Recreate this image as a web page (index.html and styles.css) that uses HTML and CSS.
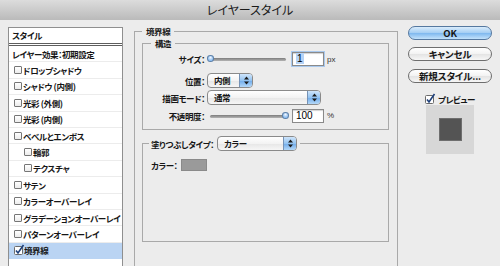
FILE: index.html
```html
<!DOCTYPE html>
<html lang="ja">
<head>
<meta charset="utf-8">
<title>レイヤースタイル</title>
<link rel="stylesheet" href="styles.css">
</head>
<body>
<div class="titlebar">レイヤースタイル</div>
<div class="content">
  <div class="list">
    <div class="list-head">スタイル</div>
    <div class="row plain">レイヤー効果：初期設定</div>
    <div class="row"><span class="cb"></span>ドロップシャドウ</div>
    <div class="row"><span class="cb"></span>シャドウ (内側)</div>
    <div class="row"><span class="cb"></span>光彩 (外側)</div>
    <div class="row"><span class="cb"></span>光彩 (内側)</div>
    <div class="row"><span class="cb"></span>ベベルとエンボス</div>
    <div class="row sub"><span class="cb"></span>輪郭</div>
    <div class="row sub"><span class="cb"></span>テクスチャ</div>
    <div class="row"><span class="cb"></span>サテン</div>
    <div class="row"><span class="cb"></span>カラーオーバーレイ</div>
    <div class="row"><span class="cb"></span>グラデーションオーバーレイ</div>
    <div class="row"><span class="cb"></span>パターンオーバーレイ</div>
    <div class="row selected"><svg class="check" width="10" height="10" viewBox="0 0 10 10"><rect x="0.5" y="1.5" width="8" height="8" rx="1" fill="#fff" stroke="#6b6b6b"/><path d="M2 5.5 L4 8 L9.5 0" fill="none" stroke="#1d3f7a" stroke-width="1.6"/></svg>境界線</div>
    <div class="row"></div>
  </div>

  <fieldset class="outer">
    <legend>境界線</legend>
    <fieldset class="struct">
      <legend>構造</legend>
      <div class="field f1">
        <span class="lab">サイズ：</span>
        <div class="slider"><div class="track"></div><div class="thumb start"></div></div>
        <div class="num"><span class="sel">1</span></div>
        <span class="unit">px</span>
      </div>
      <div class="field f2">
        <span class="lab">位置：</span>
        <div class="popup pos"><span class="val">内側</span><span class="arrows"><svg width="5" height="9" viewBox="0 0 5 9"><path d="M2.5 0.5 L5 3.5 L0 3.5Z M2.5 8.5 L5 5.5 L0 5.5Z" fill="#1b1b1b"/></svg></span></div>
      </div>
      <div class="field f3">
        <span class="lab">描画モード：</span>
        <div class="popup blend"><span class="val">通常</span><span class="arrows"><svg width="5" height="9" viewBox="0 0 5 9"><path d="M2.5 0.5 L5 3.5 L0 3.5Z M2.5 8.5 L5 5.5 L0 5.5Z" fill="#1b1b1b"/></svg></span></div>
      </div>
      <div class="field f4">
        <span class="lab">不透明度：</span>
        <div class="slider"><div class="track"></div><div class="thumb end"></div></div>
        <div class="num">100</div>
        <span class="unit">%</span>
      </div>
    </fieldset>
    <fieldset class="fill">
      <legend class="fill-legend"><span>塗りつぶしタイプ：</span><span class="popup ftype"><span class="val">カラー</span><span class="arrows"><svg width="5" height="9" viewBox="0 0 5 9"><path d="M2.5 0.5 L5 3.5 L0 3.5Z M2.5 8.5 L5 5.5 L0 5.5Z" fill="#1b1b1b"/></svg></span></span></legend>
      <div class="color-row">
        <span>カラー：</span>
        <span class="swatch"></span>
      </div>
    </fieldset>
  </fieldset>

  <div class="side">
    <div class="btn default">OK</div>
    <div class="btn cancel">キャンセル</div>
    <div class="btn newstyle">新規スタイル...</div>
    <div class="preview-row"><svg class="check" width="10" height="10" viewBox="0 0 10 10"><rect x="0.5" y="1.5" width="8" height="8" rx="1" fill="#fff" stroke="#6b6b6b"/><path d="M2 5.5 L4 8 L9.5 0" fill="none" stroke="#1d3f7a" stroke-width="1.6"/></svg><span>プレビュー</span></div>
    <div class="preview-box"><div class="preview-square"></div></div>
  </div>
</div>
</body>
</html>
```

FILE: styles.css
```css
* { box-sizing: border-box; }
html, body { margin: 0; padding: 0; }
body {
  width: 500px;
  height: 266px;
  overflow: hidden;
  background: #ececec;
  font-family: "Noto Sans CJK JP", "Noto Sans", sans-serif;
  font-size: 8.5px;
  letter-spacing: -0.4px;
  font-weight: 600;
  color: #161616;
  font-feature-settings: "palt";
}

.titlebar {
  height: 20px;
  background: linear-gradient(#dcdcdc, #bababa);
  text-align: center;
  font-size: 12px;
  font-weight: 400;
  letter-spacing: 0;
  line-height: 20px;
  color: #1a1a1a;
}

.content {
  display: flex;
  align-items: flex-start;
}

/* left style list */
.list {
  margin: 7px 0 0 8px;
  width: 115px;
  height: 260px;
  border: 1px solid #8f8f8f;
  border-bottom: none;
  background: #fff;
}
.list-head {
  height: 18px;
  line-height: 15px;
  padding-left: 3px;
  border-bottom: 3px double #5e5e5e;
}
.row {
  display: flex;
  align-items: center;
  height: 16.4px;
  padding-left: 5px;
  border-bottom: 1px solid #ececec;
  white-space: nowrap;
}
.row.plain { padding-left: 3px; }
.row.sub { padding-left: 15px; }
.row.selected { background: #bad4f3; border-bottom-color: #bad4f3; }
.cb {
  width: 8px;
  height: 8px;
  margin-right: 1px;
  border: 1px solid #767676;
  border-radius: 1px;
  background: linear-gradient(#fff, #ececec);
  flex: none;
}
.check { flex: none; overflow: visible; margin-right: 0; }

/* fieldsets */
fieldset {
  margin: 0;
  min-width: 0;
  border: 1px solid #a9a9a9;
}
legend {
  padding: 0 4px;
  height: 12px;
  line-height: 12px;
}
.outer {
  margin: 5px 0 0 11px;
  width: 264px;
  height: 300px;
  padding: 0 8px 0 7px;
}
.struct {
  width: 247px;
  padding: 0 8px 6px;
}
.field {
  display: flex;
  align-items: center;
}
.f1 { margin-top: 3px; height: 14px; }
.f2 { margin-top: 7px; height: 15px; }
.f3 { margin-top: 2px; height: 15px; }
.f4 { margin-top: 3px; height: 15px; }
.lab {
  width: 54px;
  text-align: right;
  margin-right: 2px;
  white-space: nowrap;
  flex: none;
}

.slider {
  position: relative;
  width: 82px;
  height: 8px;
  flex: none;
}
.track {
  margin: 3px 3px 0;
  height: 3px;
  border-radius: 2px;
  background: linear-gradient(#7c7c7c, #b4b4b4);
}
.thumb {
  position: absolute;
  top: 0;
  width: 7px;
  height: 7px;
  border: 1px solid #5a7fa8;
  border-radius: 50% 50% 50% 50% / 45% 45% 55% 55%;
  background: radial-gradient(circle at 50% 30%, #f0f7ff, #8dbdf0 70%);
}
.thumb.start { left: 0; }
.thumb.end { right: 0; }

.num {
  width: 32px;
  height: 14px;
  margin-left: 3px;
  border: 1px solid #8a8a8a;
  background: #fff;
  box-shadow: inset 0 1px 1px rgba(0,0,0,0.18);
  font-family: "Liberation Sans", Arial, sans-serif;
  font-weight: 400;
  font-size: 10px;
  letter-spacing: 0;
  line-height: 12px;
  padding-left: 3px;
  flex: none;
  color: #000;
}
.f1 .num { box-shadow: 0 0 0 1px #a9c9ee, inset 0 1px 1px rgba(0,0,0,0.18); }
.sel { background: #b5d3f7; padding: 0 1px; }
.unit {
  margin-left: 3px;
  font-family: "Liberation Sans", Arial, sans-serif;
  font-weight: 400;
  font-size: 8px;
  letter-spacing: 0;
  color: #333;
}

.popup {
  display: flex;
  height: 15px;
  border: 1px solid #8a8a8a;
  border-radius: 4px;
  background: linear-gradient(#ffffff, #f3f3f3 50%, #e6e6e6 51%, #f6f6f6);
  overflow: hidden;
  flex: none;
}
.popup .val {
  flex: 1;
  padding-left: 6px;
  line-height: 13px;
  white-space: nowrap;
}
.popup .arrows {
  width: 13px;
  display: flex;
  align-items: center;
  justify-content: center;
  border-left: 1px solid #7592b6;
  background: linear-gradient(#cfe5fb, #93c3f1 50%, #6eaaea 51%, #b4d8f8);
}
.pos { width: 46px; }
.blend { width: 114px; }
.ftype { width: 80px; margin-left: 3px; }

.fill {
  width: 247px;
  margin-top: 6px;
  padding: 0 6px 70px;
}
.fill-legend {
  display: flex;
  align-items: center;
  height: 15px;
  padding: 0 3px 0 2px;
}
.color-row {
  display: flex;
  align-items: center;
  padding: 8px 0 0 2px;
}
.swatch {
  width: 26px;
  height: 12px;
  margin-left: 3px;
  background: #9a9a9a;
  border: 1px solid #8a8a8a;
}

/* right column */
.side {
  margin: 6px 0 0 10px;
  width: 84px;
  display: flex;
  flex-direction: column;
  align-items: center;
}
.btn {
  width: 84px;
  height: 14px;
  border: 1px solid #6e6e6e;
  border-radius: 7px;
  background: linear-gradient(#ffffff, #f2f2f2 50%, #e3e3e3 51%, #f7f7f7);
  font-size: 9.5px;
  font-weight: 700;
  letter-spacing: -0.2px;
  text-align: center;
  line-height: 12px;
  white-space: nowrap;
}
.btn.default {
  border-color: #55789f;
  background: linear-gradient(#d9ecfc, #a3cdf3 50%, #7db7ee 51%, #c3e2fb);
}
.cancel { margin-top: 7px; }
.newstyle { margin-top: 8px; }
.preview-row {
  margin-top: 11px;
  display: flex;
  align-items: center;
  height: 9px;
  gap: 3px;
}
.preview-box {
  margin-top: 2px;
  width: 48px;
  height: 49px;
  background: #d7d7d7;
  display: flex;
  align-items: center;
  justify-content: center;
}
.preview-square {
  width: 23px;
  height: 23px;
  background: #545454;
  border: 1px solid #6e6e6e;
}
```
